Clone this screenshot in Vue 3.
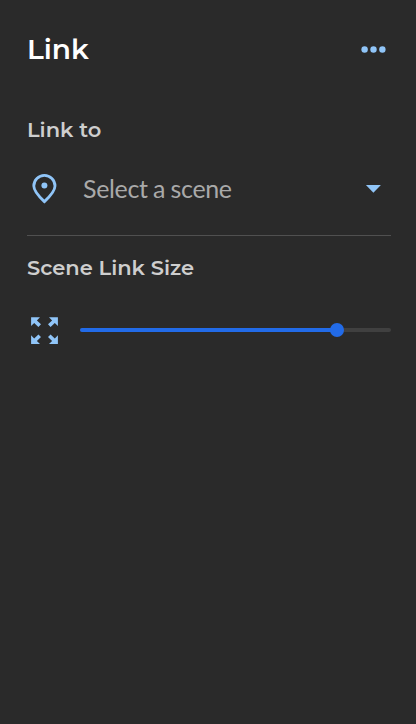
<script setup>
import { ref } from 'vue'
const size = ref(82.6)
</script>

<template>
  <main class="panel">
    <header class="header">
      <h1 class="title">Link</h1>
      <svg class="more" viewBox="0 0 26 8">
        <circle cx="4.6" cy="4.5" r="3.2" />
        <circle cx="13.5" cy="4.5" r="3.2" />
        <circle cx="22.4" cy="4.5" r="3.2" />
      </svg>
    </header>

    <section class="target">
      <h2 class="label">Link to</h2>
      <div class="select">
        <svg class="icon pin" viewBox="0 0 34 34">
          <path d="M17.4 30.6C12 25.6 6.8 20.2 6.8 15a10.6 10.6 0 0 1 21.2 0C28 20.2 22.8 25.6 17.4 30.6Z" />
          <circle cx="17.4" cy="14.6" r="3" />
        </svg>
        <span class="placeholder">Select a scene</span>
        <svg class="caret" viewBox="0 0 16 8"><path d="M.9 0H15.9L8.4 7.8Z" /></svg>
      </div>
    </section>

    <section class="sizing">
      <h2 class="label">Scene Link Size</h2>
      <div class="size-row">
        <svg class="icon expand" viewBox="0 0 34 34">
          <path d="M4.1 4.3H13L9.9 7.4L14 11.3L11.4 13.9L7.2 10L4.1 13.1Z" />
          <path d="M4.1 4.3H13L9.9 7.4L14 11.3L11.4 13.9L7.2 10L4.1 13.1Z" transform="translate(35 0) scale(-1 1)" />
          <path d="M4.1 4.3H13L9.9 7.4L14 11.3L11.4 13.9L7.2 10L4.1 13.1Z" transform="translate(0 35.4) scale(1 -1)" />
          <path d="M4.1 4.3H13L9.9 7.4L14 11.3L11.4 13.9L7.2 10L4.1 13.1Z" transform="translate(35 35.4) scale(-1 -1)" />
        </svg>
        <div class="track">
          <div class="fill" :style="{ width: size + '%' }"><span class="thumb"></span></div>
        </div>
      </div>
    </section>
  </main>
</template>

<style>
body {
  margin: 0;
  background: #2a2a2a;
}
</style>

<style scoped>
.panel {
  box-sizing: border-box;
  min-height: 724px;
  padding: 30px 25px 0 27px;
  background: #2a2a2a;
  font-family: Montserrat, Inter, sans-serif;
}
.header {
  display: flex;
  align-items: center;
  justify-content: space-between;
  height: 38px;
  padding-right: 5px;
}
.title {
  margin: 0;
  color: #fff;
  font-size: 28px;
  line-height: 38px;
  font-weight: 600;
}
.more {
  width: 26px;
  height: 8px;
  fill: #90c5f8;
}
.label {
  margin: 0;
  color: #cecece;
  font-size: 21px;
  line-height: 28px;
  font-weight: 600;
  white-space: nowrap;
}
.target {
  padding-top: 48px;
}
.select {
  display: flex;
  align-items: center;
  box-sizing: border-box;
  height: 92px;
  padding: 0 10px 3px 0;
  border-bottom: 1px solid #505050;
}
.icon {
  flex: none;
  width: 34px;
  height: 34px;
}
.pin {
  fill: none;
  stroke: #90c5f8;
  stroke-width: 2.8;
}
.pin circle {
  fill: #90c5f8;
  stroke: none;
}
.placeholder {
  flex: 1;
  margin-left: 22px;
  color: #a9a9a9;
  font-family: Lato, sans-serif;
  font-size: 25px;
  line-height: 32px;
  letter-spacing: -0.35px;
  word-spacing: -0.6px;
}
.caret {
  width: 16px;
  height: 8px;
  margin-top: 2px;
  fill: #90c5f8;
}
.sizing {
  padding-top: 18px;
}
.size-row {
  display: flex;
  align-items: center;
  gap: 19px;
  height: 34px;
  padding-top: 31px;
}
.expand {
  fill: #90c5f8;
}
.track {
  flex: 1;
  height: 4px;
  border-radius: 2px;
  background: #404040;
}
.fill {
  position: relative;
  height: 4px;
  border-radius: 2px;
  background: #226be8;
}
.thumb {
  position: absolute;
  top: -5px;
  right: -7px;
  width: 14px;
  height: 14px;
  border-radius: 50%;
  background: #226be8;
}
</style>
